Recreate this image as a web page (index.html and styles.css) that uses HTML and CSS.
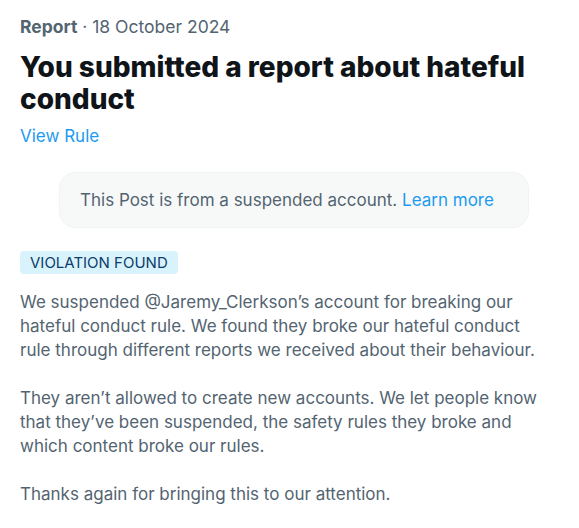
FILE: index.html
```html
<!DOCTYPE html>
<html>
<head>
<meta charset="utf-8">
<link rel="stylesheet" href="styles.css">
</head>
<body>
<div class="page">
  <div class="meta"><span class="meta-strong">Report</span> · 18 October 2024</div>
  <h1 class="title">You submitted a report about hateful conduct</h1>
  <a class="link rule-link">View Rule</a>
  <div class="notice">This Post is from a suspended account. <a class="link">Learn more</a></div>
  <div class="badge">VIOLATION FOUND</div>
  <p class="body">We suspended @Jaremy_Clerkson’s account for breaking our hateful conduct rule. We found they broke our hateful conduct rule through different reports we received about their behaviour.</p>
  <p class="body">They aren’t allowed to create new accounts. We let people know that they’ve been suspended, the safety rules they broke and which content broke our rules.</p>
  <p class="body">Thanks again for bringing this to our attention.</p>
</div>
</body>
</html>
```
FILE: styles.css
```css
html, body {
  margin: 0;
  padding: 0;
  background: #ffffff;
}
body {
  font-family: Inter, "Liberation Sans", sans-serif;
  color: #536471;
}
.page {
  padding: 15px 30px 0 20px;
  display: flex;
  flex-direction: column;
  align-items: flex-start;
}
.meta {
  font-size: 17.5px;
  line-height: 24px;
  color: #536471;
}
.meta-strong {
  font-weight: 700;
}
.title {
  margin: 12px 0 0 0;
  font-size: 28px;
  line-height: 32px;
  font-weight: 800;
  color: #0f1419;
}
.link {
  color: #1d9bf0;
  text-decoration: none;
}
.rule-link {
  margin-top: 9px;
  font-size: 17px;
  line-height: 24px;
}
.notice {
  align-self: stretch;
  margin: 24px 20px 0 39px;
  padding: 15px 20px;
  background: #f7f9f9;
  border: 1px solid #eff3f4;
  border-radius: 16px;
  font-size: 17px;
  line-height: 24px;
  color: #536471;
}
.badge {
  margin-top: 23px;
  padding: 0 10px;
  height: 23px;
  line-height: 23px;
  background: #d9f3fd;
  color: #0c3e6b;
  border-radius: 4px;
  font-size: 15px;
}
.body {
  margin: 16px 0 0 0;
  font-size: 17px;
  line-height: 24px;
  color: #536471;
}
.body + .body {
  margin-top: 24px;
}
```
